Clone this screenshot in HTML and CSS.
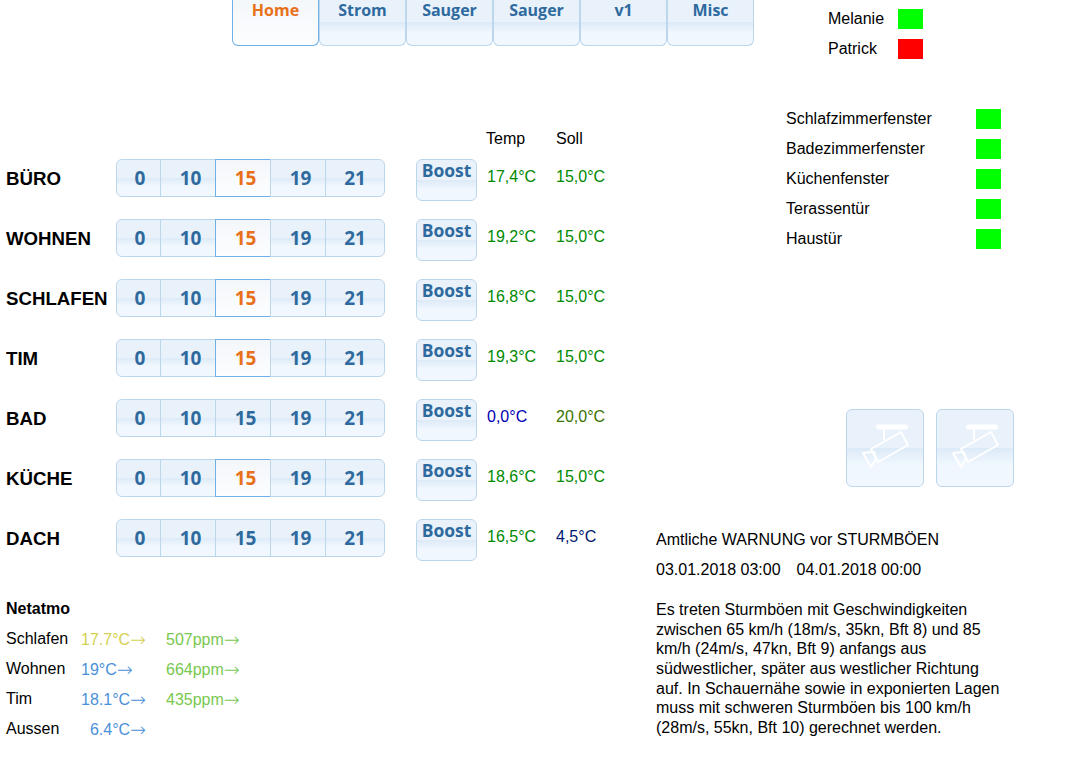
FILE: index.html
```html
<!DOCTYPE html>
<html lang="de">
<head>
  <meta charset="UTF-8" />
  <meta name="viewport" content="width=device-width, initial-scale=1.0"/>
  <title>Home</title>
  <link rel="stylesheet" href="styles.css">
</head>
<body>

  <div class="top">
    <div class="nav">
      <a class="btn active">Home</a>
      <a class="btn">Strom</a>
      <a class="btn">Sauger</a>
      <a class="btn">Sauger</a>
      <a class="btn">v1</a>
      <a class="btn">Misc</a>
    </div>
    <div class="presence">
      <div class="presence-row"><span class="presence-name">Melanie</span><span class="led green"></span></div>
      <div class="presence-row"><span class="presence-name">Patrick</span><span class="led red"></span></div>
    </div>
  </div>

  <div class="main">
    <div class="left">
      <div class="head"><span class="col-temp">Temp</span><span class="col-soll">Soll</span></div>

      <div class="room">
        <div class="room-name">BÜRO</div>
        <div class="seg"><a class="btn">0</a><a class="btn">10</a><a class="btn active">15</a><a class="btn">19</a><a class="btn">21</a></div>
        <a class="btn boost">Boost</a>
        <span class="col-temp val t-green">17,4°C</span><span class="col-soll val t-green">15,0°C</span>
      </div>
      <div class="room">
        <div class="room-name">WOHNEN</div>
        <div class="seg"><a class="btn">0</a><a class="btn">10</a><a class="btn active">15</a><a class="btn">19</a><a class="btn">21</a></div>
        <a class="btn boost">Boost</a>
        <span class="col-temp val t-green">19,2°C</span><span class="col-soll val t-green">15,0°C</span>
      </div>
      <div class="room">
        <div class="room-name">SCHLAFEN</div>
        <div class="seg"><a class="btn">0</a><a class="btn">10</a><a class="btn active">15</a><a class="btn">19</a><a class="btn">21</a></div>
        <a class="btn boost">Boost</a>
        <span class="col-temp val t-green">16,8°C</span><span class="col-soll val t-green">15,0°C</span>
      </div>
      <div class="room">
        <div class="room-name">TIM</div>
        <div class="seg"><a class="btn">0</a><a class="btn">10</a><a class="btn active">15</a><a class="btn">19</a><a class="btn">21</a></div>
        <a class="btn boost">Boost</a>
        <span class="col-temp val t-green">19,3°C</span><span class="col-soll val t-green">15,0°C</span>
      </div>
      <div class="room">
        <div class="room-name">BAD</div>
        <div class="seg"><a class="btn">0</a><a class="btn">10</a><a class="btn">15</a><a class="btn">19</a><a class="btn">21</a></div>
        <a class="btn boost">Boost</a>
        <span class="col-temp val t-blue">0,0°C</span><span class="col-soll val t-olive">20,0°C</span>
      </div>
      <div class="room">
        <div class="room-name">KÜCHE</div>
        <div class="seg"><a class="btn">0</a><a class="btn">10</a><a class="btn active">15</a><a class="btn">19</a><a class="btn">21</a></div>
        <a class="btn boost">Boost</a>
        <span class="col-temp val t-green">18,6°C</span><span class="col-soll val t-green">15,0°C</span>
      </div>
      <div class="room">
        <div class="room-name">DACH</div>
        <div class="seg"><a class="btn">0</a><a class="btn">10</a><a class="btn">15</a><a class="btn">19</a><a class="btn">21</a></div>
        <a class="btn boost">Boost</a>
        <span class="col-temp val t-green">16,5°C</span><span class="col-soll val t-navy">4,5°C</span>
      </div>

      <div class="netatmo">
        <div class="netatmo-title">Netatmo</div>
        <div class="netatmo-row"><span class="n-name">Schlafen</span><span class="n-temp n-yellow">17.7°C<span class="arrow">→</span></span><span class="n-co2">507ppm<span class="arrow">→</span></span></div>
        <div class="netatmo-row"><span class="n-name">Wohnen</span><span class="n-temp">19°C<span class="arrow">→</span></span><span class="n-co2">664ppm<span class="arrow">→</span></span></div>
        <div class="netatmo-row"><span class="n-name">Tim</span><span class="n-temp">18.1°C<span class="arrow">→</span></span><span class="n-co2">435ppm<span class="arrow">→</span></span></div>
        <div class="netatmo-row"><span class="n-name">Aussen</span><span class="n-temp">&nbsp;&nbsp;6.4°C<span class="arrow">→</span></span></div>
      </div>
    </div>

    <div class="right">
      <div class="windows">
        <div class="window-row"><span class="window-name">Schlafzimmerfenster</span><span class="led green"></span></div>
        <div class="window-row"><span class="window-name">Badezimmerfenster</span><span class="led green"></span></div>
        <div class="window-row"><span class="window-name">Küchenfenster</span><span class="led green"></span></div>
        <div class="window-row"><span class="window-name">Terassentür</span><span class="led green"></span></div>
        <div class="window-row"><span class="window-name">Haustür</span><span class="led green"></span></div>
      </div>

      <div class="cams">
        <a class="btn cam">
          <svg width="78" height="78" viewBox="0 0 78 78" fill="none" stroke="#fff" stroke-width="2" stroke-linejoin="round">
            <rect x="30" y="15.500" width="32" height="5" rx="2.500" fill="#fff" stroke="none"/>
            <path d="M38 20v11"/>
            <path d="M25 40 55 23 62 36 32 53Z"/>
            <path d="M17 44 28 43 30 50 25 58Z"/>
          </svg>
        </a>
        <a class="btn cam">
          <svg width="78" height="78" viewBox="0 0 78 78" fill="none" stroke="#fff" stroke-width="2" stroke-linejoin="round">
            <rect x="30" y="15.500" width="32" height="5" rx="2.500" fill="#fff" stroke="none"/>
            <path d="M38 20v11"/>
            <path d="M25 40 55 23 62 36 32 53Z"/>
            <path d="M17 44 28 43 30 50 25 58Z"/>
          </svg>
        </a>
      </div>

      <div class="warning">
        <div class="warning-line">Amtliche WARNUNG vor STURMBÖEN</div>
        <div class="warning-line">03.01.2018 03:00&emsp;04.01.2018 00:00</div>
        <p class="warning-text">Es treten Sturmböen mit Geschwindigkeiten zwischen 65 km/h (18m/s, 35kn, Bft 8) und 85 km/h (24m/s, 47kn, Bft 9) anfangs aus südwestlicher, später aus westlicher Richtung auf. In Schauernähe sowie in exponierten Lagen muss mit schweren Sturmböen bis 100 km/h (28m/s, 55kn, Bft 10) gerechnet werden.</p>
      </div>
    </div>
  </div>

</body>
</html>
```

FILE: styles.css
```css
html, body {
  margin: 0;
  padding: 0;
  background-color: white;
  color: black;
  font-family: "Liberation Sans", Arial, sans-serif;
  font-size: 16px;
}

/* buttons */
.btn {
  display: block;
  box-sizing: border-box;
  border: 1px solid #bcd6ec;
  background: linear-gradient(#e9f2fb 0, #e9f2fb 50%, #dceaf7 50%, #f0f7fe 72%);
  color: #2f6a9e;
  font-family: "Open Sans", sans-serif;
  font-weight: bold;
  font-size: 16px;
  text-align: center;
}

.btn.active {
  border-color: #6fb0e6;
  background: linear-gradient(#f4f7fa, #fcfdff);
  color: #e8701a;
}

/* top bar */
.top {
  display: flex;
  height: 64px;
  padding-left: 232px;
}

.nav {
  display: flex;
  align-self: flex-start;
  width: 522px;
  height: 46px;
}

.nav .btn {
  flex: 0 0 87px;
  line-height: 20px;
  border-top: none;
  border-radius: 0 0 6px 6px;
}

.presence {
  margin-left: 74px;
  padding-top: 4px;
}

.presence-row {
  display: flex;
  align-items: center;
  height: 30px;
}

.presence-name {
  width: 70px;
}

.led {
  display: block;
  width: 25px;
  height: 20px;
}

.green { background-color: #00ff00; }
.red { background-color: #ff0000; }

/* main */
.main {
  display: grid;
  grid-template-columns: 656px 1fr;
}

.head {
  display: flex;
  height: 29px;
  margin-top: 66px;
  padding-left: 486px;
  line-height: 17px;
}

.col-temp {
  width: 70px;
}

.room {
  display: flex;
  align-items: flex-start;
  height: 60px;
}

.room-name {
  width: 110px;
  padding-left: 6px;
  font-weight: bold;
  font-size: 18.670px;
  line-height: 40px;
}

.seg {
  display: flex;
  width: 269px;
  height: 38px;
}

.seg .btn {
  width: 56px;
  margin-right: -1px;
  padding-left: 5px;
  line-height: 37px;
  font-size: 19px;
}

.seg .btn:first-child {
  width: 45px;
  padding-left: 3px;
  border-radius: 6px 0 0 6px;
}

.seg .btn:last-child {
  width: 60px;
  margin-right: 0;
  padding-left: 0;
  border-radius: 0 6px 6px 0;
}

.btn.boost {
  width: 61px;
  height: 42px;
  margin: 0 10px 0 31px;
  border-radius: 6px;
  line-height: 21px;
  font-size: 17.500px;
}

.val {
  line-height: 36px;
}

.room .col-temp {
  width: 69px;
}

.t-green { color: #008a00; }
.t-blue { color: #0000b4; }
.t-olive { color: #3c7400; }
.t-navy { color: #00186e; }

/* netatmo */
.netatmo {
  padding: 15px 0 0 6px;
}

.netatmo-title {
  font-weight: bold;
  line-height: 29px;
}

.netatmo-row {
  display: flex;
  height: 30px;
}

.n-name {
  width: 75px;
  line-height: 31px;
}

.n-temp {
  width: 85px;
  line-height: 33px;
  color: #4a90d9;
}

.n-yellow {
  color: #d4d14f;
}

.n-co2 {
  line-height: 33px;
  color: #79c850;
}

.arrow {
  font-family: "DejaVu Sans", sans-serif;
  font-weight: 200;
  font-size: 19px;
  line-height: 1;
  vertical-align: -1px;
}

/* right side */
.windows {
  margin-top: 40px;
  padding-left: 130px;
}

.window-row {
  display: flex;
  align-items: center;
  height: 30px;
}

.window-name {
  width: 190px;
}

.cams {
  display: flex;
  gap: 12px;
  margin: 155px 0 0 190px;
}

.btn.cam {
  width: 78px;
  height: 78px;
  border-radius: 6px;
}

.cam svg {
  display: block;
  margin: -1px;
}

.warning {
  margin-top: 38px;
}

.warning-line {
  line-height: 30px;
}

.warning-text {
  width: 345px;
  margin: 15px 0 0;
  line-height: 19.670px;
}
```
